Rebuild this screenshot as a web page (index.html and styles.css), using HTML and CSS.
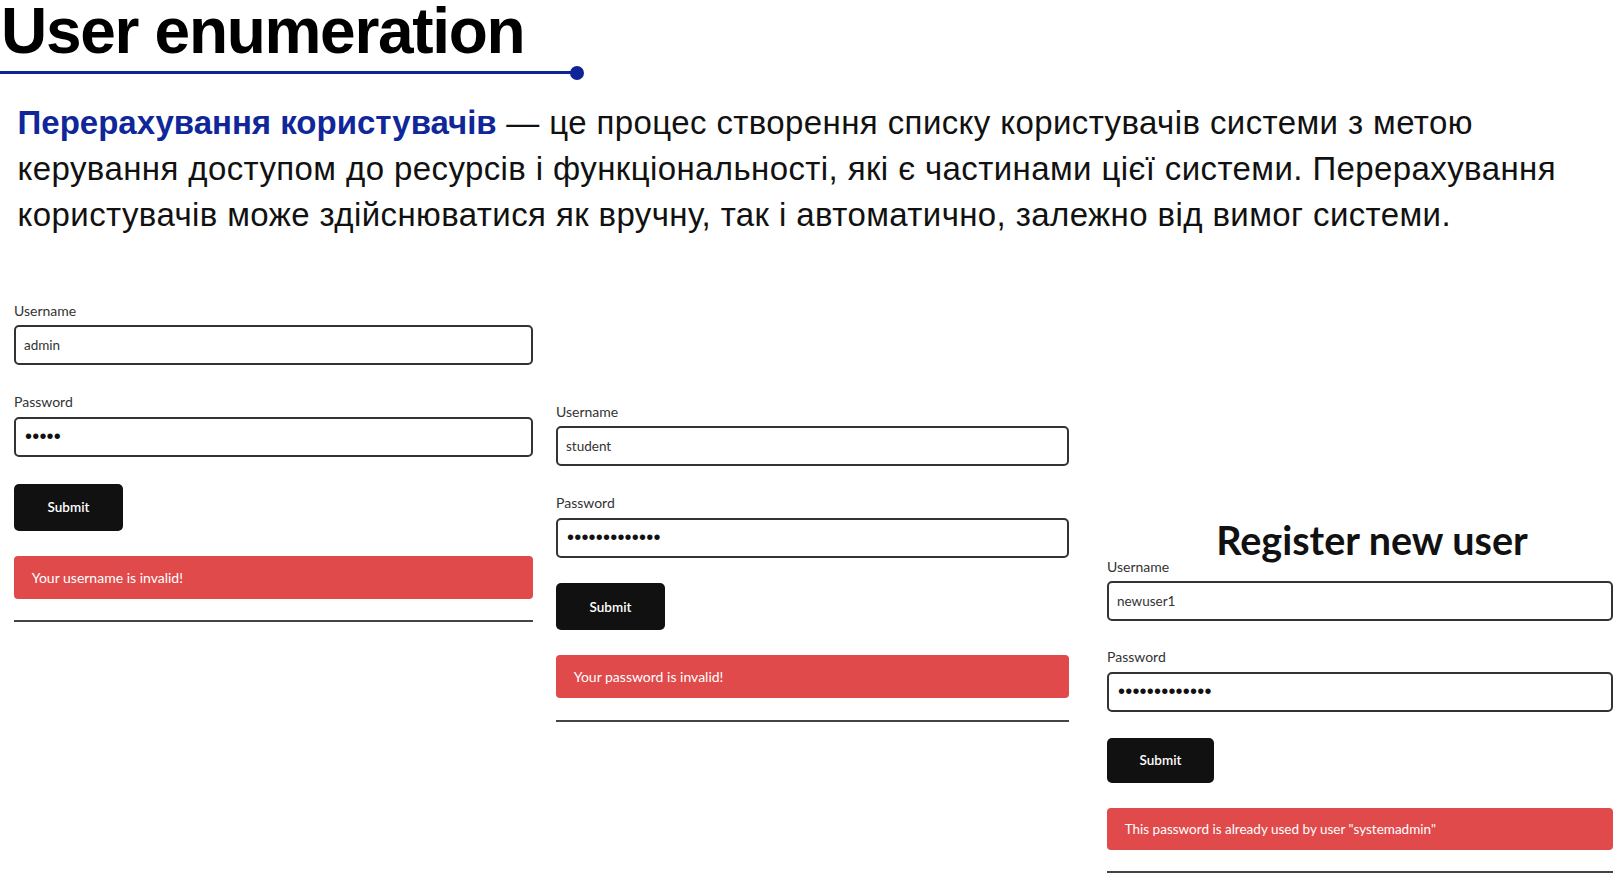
FILE: index.html
```html
<!DOCTYPE html>
<html lang="uk">
<head>
<meta charset="utf-8">
<title>User enumeration</title>
<link rel="stylesheet" href="styles.css">
</head>
<body>
<header class="title-block">
  <h1 class="title">User enumeration</h1>
  <div class="rule"><span class="rule-line"></span><span class="rule-dot"></span></div>
</header>
<p class="intro"><strong class="term">Перерахування користувачів</strong> — це процес створення списку користувачів системи з метою<br>керування доступом до ресурсів і функціональності, які є частинами цієї системи. Перерахування<br>користувачів може здійснюватися як вручну, так і автоматично, залежно від вимог системи.</p>
<section class="shots">
  <div class="shot shot-1">
    <div class="form form-loose">
      <div class="label">Username</div>
      <div class="field">admin</div>
      <div class="label label-gap">Password</div>
      <div class="field field-pw">•••••</div>
      <div class="btn">Submit</div>
      <div class="alert">Your username is invalid!</div>
      <hr class="divider">
    </div>
  </div>
  <div class="shot shot-2">
    <div class="form">
      <div class="label">Username</div>
      <div class="field">student</div>
      <div class="label label-gap">Password</div>
      <div class="field field-pw">•••••••••••••</div>
      <div class="btn">Submit</div>
      <div class="alert">Your password is invalid!</div>
      <hr class="divider">
    </div>
  </div>
  <div class="shot shot-3">
    <h2 class="reg-title">Register new user</h2>
    <div class="form form-compact">
      <div class="label">Username</div>
      <div class="field">newuser1</div>
      <div class="label label-gap">Password</div>
      <div class="field field-pw">•••••••••••••</div>
      <div class="btn">Submit</div>
      <div class="alert">This password is already used by user "systemadmin"</div>
      <hr class="divider">
    </div>
  </div>
</section>
</body>
</html>
```

FILE: styles.css
```css
body {
  margin: 0;
  background: #ffffff;
  color: #000000;
  font-family: "Liberation Sans", Arial, sans-serif;
}

.title {
  margin: 0 0 0 1px;
  font-size: 64px;
  line-height: 62px;
  font-weight: 700;
  letter-spacing: -1.3px;
}

.rule {
  display: flex;
  align-items: center;
  width: 584px;
  height: 14px;
  margin-top: 3.7px;
}

.rule-line {
  flex: 1;
  height: 3px;
  background: #0f2494;
}

.rule-dot {
  width: 14px;
  height: 14px;
  margin-left: -2px;
  border-radius: 50%;
  background: #0f2494;
}

.intro {
  margin: 20px 0 0 17.6px;
  font-size: 33px;
  line-height: 46px;
  letter-spacing: 0.4px;
  color: #111111;
}

.term {
  color: #10279a;
  font-weight: 700;
  letter-spacing: 0;
}

.shots {
  display: flex;
  align-items: flex-start;
  margin-top: 65px;
  padding-left: 14px;
  font-family: Lato, "Liberation Sans", sans-serif;
}

.shot-1 {
  width: 519px;
}

.shot-2 {
  width: 513px;
  margin-left: 23px;
  margin-top: 101px;
}

.shot-3 {
  width: 506px;
  margin-left: 38px;
  margin-top: 217px;
}

.reg-title {
  margin: 0;
  padding-left: 24px;
  font-size: 39.5px;
  line-height: 39px;
  font-weight: 700;
  text-align: center;
  color: #111111;
}

.label {
  font-size: 14px;
  line-height: 16px;
  color: #333333;
  margin-bottom: 6.5px;
}

.label-gap {
  margin-top: 29px;
}

.field {
  box-sizing: border-box;
  height: 40px;
  display: flex;
  align-items: center;
  padding: 0 8px;
  border: 2px solid #333333;
  border-radius: 5px;
  font-size: 13.5px;
  color: #333333;
}

.field-pw {
  padding-left: 9px;
  font-family: "Liberation Sans", Arial, sans-serif;
  font-size: 20px;
  letter-spacing: 0.2px;
  color: #111111;
}

.btn {
  box-sizing: border-box;
  width: 109px;
  height: 47px;
  margin-top: 25.7px;
  display: flex;
  align-items: center;
  justify-content: center;
  border-radius: 5px;
  background: #111111;
  color: #ffffff;
  font-size: 13.5px;
  font-weight: 600;
}

.alert {
  box-sizing: border-box;
  height: 43px;
  margin-top: 25px;
  display: flex;
  align-items: center;
  padding-left: 17.7px;
  border-radius: 4px;
  background: #e04a4b;
  color: #ffffff;
  font-size: 14px;
}

.divider {
  margin: 21.5px 0 0;
  border: 0;
  height: 2px;
  background: #444444;
}

.form-loose .btn {
  margin-top: 27.2px;
}

.form-loose .alert {
  margin-top: 25.5px;
}

.form-loose .divider {
  margin-top: 20.5px;
}

.form-compact .label-gap {
  margin-top: 28.3px;
}

.form-compact .btn {
  width: 107px;
  height: 45px;
}

.form-compact .alert {
  height: 42.5px;
  font-size: 13.5px;
}

.form-compact .divider {
  margin-top: 20.5px;
}
```
